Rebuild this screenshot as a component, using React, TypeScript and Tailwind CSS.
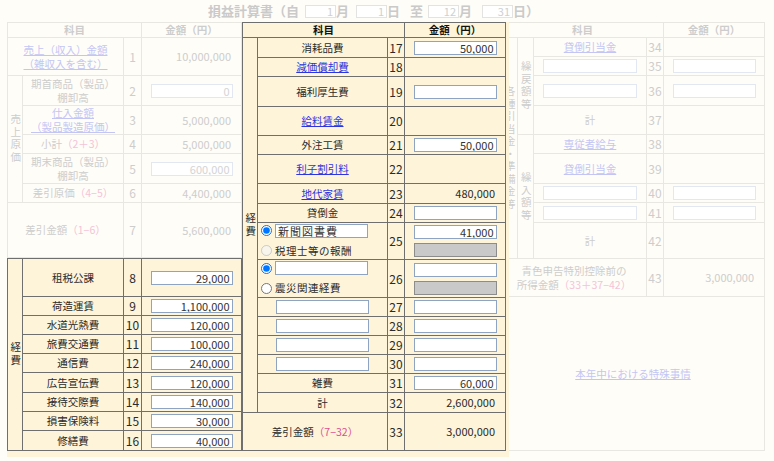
import React from "react"

// border colours: faded part of the form vs the highlighted (active) part
const LF = "border-[#e9e7e1]"
const LD = "border-[#6f6f6f]"
const CREAM = "bg-[#fdf4da]"

const fText = "text-[#cdcdcd]"
const fLink = "text-[#c3c6f4] underline"
const fPink = "text-[#f3c3d6]"
const dLink = "text-[#2b35e0] underline"
const dPink = "text-[#df4f8f]"

function Cell({ d, className = "", children }: { d?: boolean; className?: string; children?: React.ReactNode }) {
  return (
    <div className={`border-r border-b ${d ? LD : LF} flex items-center justify-center min-w-0 ${className}`}>
      {children}
    </div>
  )
}

function Box({
  v = "",
  w = "w-[82px]",
  faded,
  gray,
  left,
}: {
  v?: string
  w?: string
  faded?: boolean
  gray?: boolean
  left?: boolean
}) {
  const look = gray
    ? "bg-[#c9c9c9] border-[#8c8c8c]"
    : faded
    ? "bg-white border-[#e2e7f1] text-[#d4d4d4]"
    : "bg-white border-[#8ea4c0] text-[#333]"
  return (
    <input
      readOnly
      value={v}
      className={`${w} h-[14px] border ${look} px-[2px] text-[11px] leading-none ${left ? "text-left tracking-[1px]" : "text-right"} outline-none`}
    />
  )
}

// stacked (vertical) labels such as 経費 / 売上原価
function VText({ text }: { text: string }) {
  return <div className="[writing-mode:vertical-rl] [text-orientation:upright] tracking-[2px] leading-none">{text}</div>
}

const num = "text-[12px]"
const amt = "justify-end pr-[10px] text-[11px]"

function LeftFaded() {
  return (
    <div
      className={`grid grid-cols-[15px_101px_18px_100px] grid-rows-[15px_38px_30px_29px_19px_30px_19px_55px] border-l border-t ${LF} ${fText}`}
    >
      <Cell className="col-span-3 font-bold">科目</Cell>
      <Cell className="font-bold">金額（円）</Cell>

      <Cell className="col-span-2">
        <div className={`flex flex-col items-center leading-[14px] ${fLink}`}>
          <span>売上（収入）金額</span>
          <span>（雑収入を含む）</span>
        </div>
      </Cell>
      <Cell className={num}>1</Cell>
      <Cell className={amt}>10,000,000</Cell>

      <Cell className="row-span-5">
        <VText text="売上原価" />
      </Cell>
      <Cell>
        <div className="flex flex-col items-center leading-[14px]">
          <span>期首商品（製品）</span>
          <span>棚卸高</span>
        </div>
      </Cell>
      <Cell className={num}>2</Cell>
      <Cell>
        <Box v="0" faded />
      </Cell>

      <Cell>
        <div className={`flex flex-col items-center leading-[14px] ${fLink}`}>
          <span>仕入金額</span>
          <span>（製品製造原価）</span>
        </div>
      </Cell>
      <Cell className={num}>3</Cell>
      <Cell className={amt}>5,000,000</Cell>

      <Cell>
        小計<span className={fPink}>（2＋3）</span>
      </Cell>
      <Cell className={num}>4</Cell>
      <Cell className={amt}>5,000,000</Cell>

      <Cell>
        <div className="flex flex-col items-center leading-[14px]">
          <span>期末商品（製品）</span>
          <span>棚卸高</span>
        </div>
      </Cell>
      <Cell className={num}>5</Cell>
      <Cell>
        <Box v="600,000" faded />
      </Cell>

      <Cell>
        差引原価<span className={fPink}>（4−5）</span>
      </Cell>
      <Cell className={num}>6</Cell>
      <Cell className={amt}>4,400,000</Cell>

      <Cell className="col-span-2">
        差引金額<span className={fPink}>（1−6）</span>
      </Cell>
      <Cell className={num}>7</Cell>
      <Cell className={amt}>5,600,000</Cell>
    </div>
  )
}

const leftRows: [string, string, string][] = [
  ["租税公課", "8", "29,000"],
  ["荷造運賃", "9", "1,100,000"],
  ["水道光熱費", "10", "120,000"],
  ["旅費交通費", "11", "100,000"],
  ["通信費", "12", "240,000"],
  ["広告宣伝費", "13", "120,000"],
  ["接待交際費", "14", "140,000"],
  ["損害保険料", "15", "30,000"],
  ["修繕費", "16", "40,000"],
]

function LeftActive() {
  return (
    <div
      className={`grid grid-cols-[15px_101px_18px_100px] grid-rows-[38px_19px_19px_19px_19px_20px_19px_19px_20px] border-l border-t ${LD} ${CREAM} text-[#2b2b2b]`}
    >
      <Cell d className="row-span-9">
        <VText text="経費" />
      </Cell>
      {leftRows.map(([label, n, v]) => (
        <React.Fragment key={n}>
          <Cell d>{label}</Cell>
          <Cell d className={num}>
            {n}
          </Cell>
          <Cell d>
            <Box v={v} />
          </Cell>
        </React.Fragment>
      ))}
    </div>
  )
}

function Middle() {
  const simple = (label: React.ReactNode, n: string, right: React.ReactNode) => (
    <>
      <Cell d>{label}</Cell>
      <Cell d className={num}>
        {n}
      </Cell>
      {right}
    </>
  )
  const box = (v = "") => (
    <Cell d>
      <Box v={v} w="w-[83px]" />
    </Cell>
  )
  const empty = <Cell d />
  return (
    <div
      className={`grid grid-cols-[15px_130px_17px_101px] grid-rows-[15px_20px_19px_30px_29px_19px_29px_20px_19px_37px_38px_19px_19px_19px_19px_19px_20px_38px] border-l border-t ${LD} ${CREAM} text-[#2b2b2b]`}
    >
      <Cell d className="col-span-3 font-bold text-[#111]">
        科目
      </Cell>
      <Cell d className="font-bold text-[#111]">
        金額（円）
      </Cell>

      <Cell d className="row-span-16">
        <VText text="経費" />
      </Cell>
      {simple("消耗品費", "17", box("50,000"))}
      {simple(<span className={dLink}>減価償却費</span>, "18", empty)}
      {simple("福利厚生費", "19", box())}
      {simple(<span className={dLink}>給料賃金</span>, "20", empty)}
      {simple("外注工賃", "21", box("50,000"))}
      {simple(<span className={dLink}>利子割引料</span>, "22", empty)}
      {simple(
        <span className={dLink}>地代家賃</span>,
        "23",
        <Cell d className={amt}>
          480,000
        </Cell>
      )}
      {simple("貸倒金", "24", box())}

      <Cell d className="flex-col !items-start justify-center gap-[5px] pl-[3px]">
        <div className="flex items-center gap-[3px]">
          <input type="radio" name="r25" defaultChecked className="w-[11px] h-[11px] m-0" />
          <Box v="新聞図書費" w="w-[93px]" left />
        </div>
        <div className="flex items-center gap-[3px]">
          <input type="radio" name="r25" disabled className="w-[11px] h-[11px] m-0" />
          <span className="tracking-[0.5px]">税理士等の報酬</span>
        </div>
      </Cell>
      <Cell d className={num}>
        25
      </Cell>
      <Cell d className="flex-col gap-[4px]">
        <Box v="41,000" w="w-[83px]" />
        <Box gray w="w-[83px]" />
      </Cell>

      <Cell d className="flex-col !items-start justify-center gap-[5px] pl-[3px]">
        <div className="flex items-center gap-[3px]">
          <input type="radio" name="r26" defaultChecked className="w-[11px] h-[11px] m-0" />
          <Box w="w-[93px]" />
        </div>
        <div className="flex items-center gap-[3px]">
          <input type="radio" name="r26" className="w-[11px] h-[11px] m-0" />
          <span className="tracking-[0.5px]">震災関連経費</span>
        </div>
      </Cell>
      <Cell d className={num}>
        26
      </Cell>
      <Cell d className="flex-col gap-[4px]">
        <Box w="w-[83px]" />
        <Box gray w="w-[83px]" />
      </Cell>

      {["27", "28", "29", "30"].map((n) => (
        <React.Fragment key={n}>
          {simple(<Box w="w-[93px]" />, n, box())}
        </React.Fragment>
      ))}
      {simple("雑費", "31", box("60,000"))}
      {simple(
        "計",
        "32",
        <Cell d className={amt}>
          2,600,000
        </Cell>
      )}

      <Cell d className="col-span-2">
        差引金額<span className={dPink}>（7−32）</span>
      </Cell>
      <Cell d className={num}>
        33
      </Cell>
      <Cell d className={amt}>
        3,000,000
      </Cell>
    </div>
  )
}

function Right() {
  const inRow = (n: string) => (
    <>
      <Cell>
        <Box faded w="w-[94px]" />
      </Cell>
      <Cell className={num}>{n}</Cell>
      <Cell>
        <Box faded w="w-[83px]" />
      </Cell>
    </>
  )
  return (
    <div
      className={`grid grid-cols-[16px_16px_113px_17px_101px] grid-rows-[15px_19px_19px_30px_29px_19px_30px_19px_20px_36px_38px_154px] border-l border-t ${LF} ${fText}`}
    >
      <Cell className="col-span-4 font-bold">科目</Cell>
      <Cell className="font-bold">金額（円）</Cell>

      <Cell className="row-span-9">
        <VText text="各種引当金・準備金等" />
      </Cell>
      <Cell className="row-span-4">
        <VText text="繰戻額等" />
      </Cell>
      <Cell>
        <span className={fLink}>貸倒引当金</span>
      </Cell>
      <Cell className={num}>34</Cell>
      <Cell />
      {inRow("35")}
      {inRow("36")}
      <Cell>計</Cell>
      <Cell className={num}>37</Cell>
      <Cell />

      <Cell className="row-span-5">
        <VText text="繰入額等" />
      </Cell>
      <Cell>
        <span className={fLink}>専従者給与</span>
      </Cell>
      <Cell className={num}>38</Cell>
      <Cell />
      <Cell>
        <span className={fLink}>貸倒引当金</span>
      </Cell>
      <Cell className={num}>39</Cell>
      <Cell />
      {inRow("40")}
      {inRow("41")}
      <Cell>計</Cell>
      <Cell className={num}>42</Cell>
      <Cell />

      <Cell className="col-span-3">
        <div className="flex flex-col items-center leading-[14px]">
          <span>青色申告特別控除前の</span>
          <span>
            所得金額<span className={fPink}>（33＋37−42）</span>
          </span>
        </div>
      </Cell>
      <Cell className={num}>43</Cell>
      <Cell className={amt}>3,000,000</Cell>

      <Cell className="col-span-5">
        <span className={fLink}>本年中における特殊事情</span>
      </Cell>
    </div>
  )
}

function DateBox({ v }: { v: string }) {
  return (
    <input
      readOnly
      value={v}
      className="w-[31px] h-[13px] border border-[#e3e3e3] bg-white px-[2px] text-right text-[11px] font-normal leading-none text-[#d0d0d0] outline-none"
    />
  )
}

export default function App() {
  return (
    <div className="min-h-[461px] w-[774px] bg-[#fffdf8] font-['Noto_Sans_CJK_JP',sans-serif] text-[10.5px]">
      <div className="h-[22px] flex items-center pl-[208px] text-[13px] font-bold text-[#cacaca]">
        <span>損益計算書（自</span>
        <span className="ml-[6px]">
          <DateBox v="1" />
        </span>
        <span>月</span>
        <span className="ml-[7px]">
          <DateBox v="1" />
        </span>
        <span>日</span>
        <span className="ml-[10px]">至</span>
        <span className="ml-[5px]">
          <DateBox v="12" />
        </span>
        <span>月</span>
        <span className="ml-[10px]">
          <DateBox v="31" />
        </span>
        <span>日）</span>
      </div>

      <div className="flex items-start pl-[7px]">
        <div className="flex flex-col w-[235px]">
          <LeftFaded />
          <div className={`${CREAM} pb-[6px]`}>
            <LeftActive />
          </div>
        </div>
        <div className={`relative z-10 ${CREAM} pr-[3px] pb-[6px]`}>
          <Middle />
        </div>
        <div className="-ml-[8px]">
          <Right />
        </div>
      </div>
    </div>
  )
}
